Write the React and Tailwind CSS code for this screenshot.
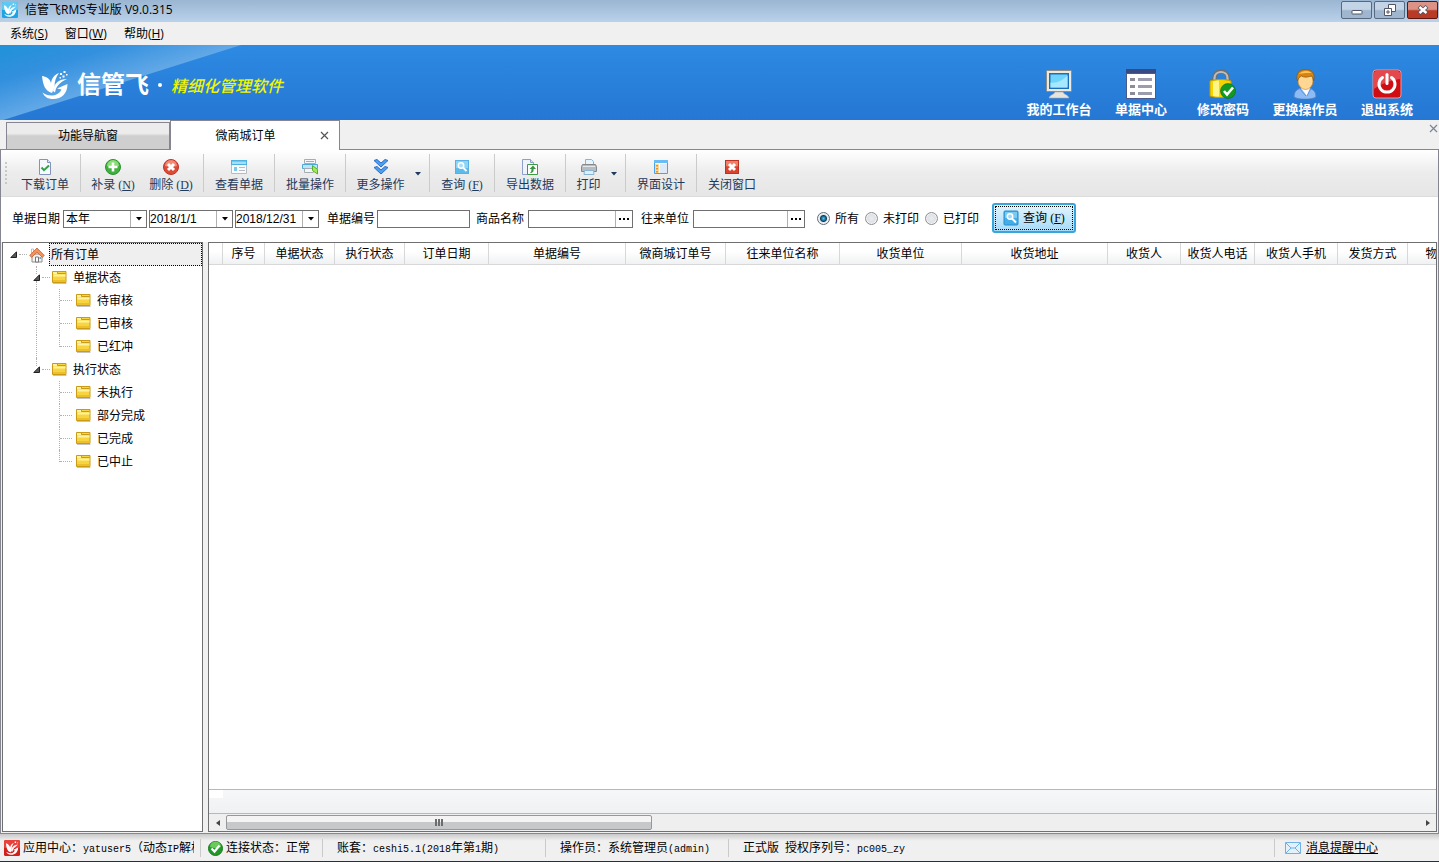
import { useState } from "react";

const columns = [
  { label: "", width: "w-[14px]" },
  { label: "序号", width: "w-[42px]" },
  { label: "单据状态", width: "w-[70px]" },
  { label: "执行状态", width: "w-[70px]" },
  { label: "订单日期", width: "w-[84px]" },
  { label: "单据编号", width: "w-[137px]" },
  { label: "微商城订单号", width: "w-[100px]" },
  { label: "往来单位名称", width: "w-[114px]" },
  { label: "收货单位", width: "w-[122px]" },
  { label: "收货地址", width: "w-[146px]" },
  { label: "收货人", width: "w-[73px]" },
  { label: "收货人电话", width: "w-[74px]" },
  { label: "收货人手机", width: "w-[83px]" },
  { label: "发货方式", width: "w-[70px]" },
  { label: "物", width: "w-[48px]" },
];

const tree = [
  { label: "单据状态", children: ["待审核", "已审核", "已红冲"] },
  { label: "执行状态", children: ["未执行", "部分完成", "已完成", "已中止"] },
];

function Swirl({ className }) {
  return (
    <svg viewBox="0 0 28 30" className={className} fill="currentColor" aria-hidden="true">
      <path d="M1 6c4 .5 8 2.500 9 7 1-5 3-8 8-10-3 4-4.500 8-4.500 14L11 23C4 21 2 15 1 6z" />
      <path d="M26 9c-8 0-13 4-14 12l2 1.500C15 16 19 12 26 9z" />
      <path d="M16 18.500L26.500 14C26.500 23 21 29 12 29c-5 0-8.500-2-10.500-6.500C7 27 17 27 20.500 19.500z" />
      <path d="M19 3h2v2h-2zM21.500 5.500h2v2h-2zM22.500 1h2v2h-2zM25 4h1.500v1.500H25zM18.500 7h1.500v1.500h-1.500z" />
    </svg>
  );
}

function LogoTile({ top, bottom }) {
  return (
    <svg viewBox="0 0 16 16" className="size-4 shrink-0" aria-hidden="true">
      <rect width="16" height="16" rx="1.5" fill={bottom} />
      <rect width="16" height="8" rx="1.5" fill={top} />
      <g transform="translate(1.500 1.500) scale(.46)" fill="#fff">
        <path d="M1 4c4 .5 8 4.500 9 9 1-5 3-8 8-10-3 4-4.500 8-4.500 14L11 24C4 21 2 15 1 4z" />
        <path d="M27 7c-9 0-14 5-15 14l3 1.500C16 16 20 12 27 7z" />
        <path d="M16 18.500L27.500 13C27.500 23 21 29 12 29c-5 0-8.500-2-10.500-6.500C7 27 17 27 20.500 19.500z" />
        <path d="M20 0h3v3h-3zM25 2h2v2h-2z" />
      </g>
    </svg>
  );
}

function Monitor() {
  return (
    <svg viewBox="0 0 30 30" className="size-[30px]" aria-hidden="true">
      <rect x="2.500" y="1.500" width="25" height="21" rx="1" fill="#ece9e2" stroke="#8d8d88" />
      <rect x="5" y="4" width="20" height="16" fill="#1b6fb8" />
      <rect x="6.500" y="5.500" width="17" height="13" fill="#6fd4fb" />
      <path d="M6.500 18.500v-5c6 1 12-2 17-7v12z" fill="#a5e8ff" />
      <path d="M11 23h8c1 3 5 2.500 6 6H5c1-3.500 5-3 6-6z" fill="#e6e4de" stroke="#a9a7a1" strokeWidth=".6" />
    </svg>
  );
}

function FormIcon() {
  return (
    <svg viewBox="0 0 30 30" className="size-[30px]" aria-hidden="true">
      <rect width="30" height="30" fill="#4a5a8c" />
      <rect width="30" height="4" fill="#384a80" />
      <rect x="1" y="5" width="28" height="24" fill="#fff" />
      <path d="M4 9h5v3H4zM4 16h5v3H4zM4 23h5v3H4z" fill="#8c8c98" />
      <path d="M12 9h14v3H12zM12 16h14v3H12zM12 23h14v3H12z" fill="#9c9caf" />
    </svg>
  );
}

function LockIcon() {
  return (
    <svg viewBox="0 0 30 30" className="size-[30px]" aria-hidden="true">
      <path d="M6.500 14V9c0-9 13-9 13 0v5" fill="none" stroke="#6f6f6f" strokeWidth="4.500" />
      <path d="M6.500 13V9c0-8 13-8 13 0v4" fill="none" stroke="#bdbdbd" strokeWidth="2.200" />
      <path d="M2 12c6-2 15-2 21 0v15c-6 2-15 2-21 0z" fill="#f5d400" stroke="#c49a05" />
      <path d="M5 12.500c2-.7 4-1 6-1v16c-2 0-4 0-6-.6z" fill="#fff68a" />
      <circle cx="20" cy="22" r="7.500" fill="#129a22" stroke="#0b6a15" strokeWidth=".6" />
      <path d="M16 22l3 3.500 6-7" fill="none" stroke="#fff" strokeWidth="2.600" />
    </svg>
  );
}

function UserIcon() {
  return (
    <svg viewBox="0 0 30 30" className="size-[30px]" aria-hidden="true">
      <path d="M4 28c0-6 3-8 8-9h6c5 1 8 3 8 9-4 3-18 3-22 0z" fill="#8dbcf5" stroke="#4f83cb" />
      <path d="M11 19l6 8 3-8-3-2h-4z" fill="#fff" />
      <path d="M16 27l-7-8M17 27l4-8" stroke="#5c93dc" />
      <ellipse cx="15.500" cy="12" rx="7.500" ry="8.500" fill="#ffd795" stroke="#d18a2a" strokeWidth=".7" />
      <path d="M7.500 12C5 4 10 .5 15.500.5S26 4 23.500 12c0-3-1-4.500-2-5-4 1.500-8 1.500-10 0-2 1-3.500 2.500-4 5z" fill="#d98410" stroke="#8f5305" strokeWidth=".7" />
      <path d="M9 5c3-3.500 9-4 12.500-1-3.500 0-7-.5-12.500 1z" fill="#ffc35c" />
    </svg>
  );
}

function PowerIcon() {
  return (
    <svg viewBox="0 0 30 30" className="size-[30px]" aria-hidden="true">
      <rect x="1" y="1" width="28" height="28" rx="3" fill="#cf0d12" stroke="#e89a9c" />
      <path d="M2 4c0-1 1-2 2-2h22c1 0 2 1 2 2v6C20 11 8 15 2 20z" fill="#ec6266" opacity=".7" />
      <path d="M10.500 8.500a8 8 0 1 0 9 0" fill="none" stroke="#fff" strokeWidth="3" strokeLinecap="round" />
      <path d="M15 5.500v9" stroke="#fff" strokeWidth="3" strokeLinecap="round" />
    </svg>
  );
}

const shortcuts = [
  { label: "我的工作台", Icon: Monitor },
  { label: "单据中心", Icon: FormIcon },
  { label: "修改密码", Icon: LockIcon },
  { label: "更换操作员", Icon: UserIcon },
  { label: "退出系统", Icon: PowerIcon },
];

// 16px toolbar glyphs
const glyphs = {
  download: (
    <>
      <path d="M2.500.5h8l3 3v12h-11z" fill="#f6f9fd" stroke="#8493bd" />
      <path d="M10.500.5v3h3" fill="#dfe6f5" stroke="#8493bd" />
      <path d="M4.500 8.500l2.500 2.700 5-4.700" fill="none" stroke="#31a345" strokeWidth="2" />
    </>
  ),
  add: (
    <>
      <circle cx="8" cy="8" r="7.500" fill="#3fb13d" stroke="#2f8f30" />
      <path d="M2 7a6 6 0 0 1 12 0c-4 1.500-8 1.500-12 0z" fill="#8bdc75" />
      <path d="M8 3.500v9M3.500 8h9" stroke="#fff" strokeWidth="2.600" />
    </>
  ),
  remove: (
    <>
      <circle cx="8" cy="8" r="7.500" fill="#dd4b38" stroke="#c03424" />
      <path d="M2 7a6 6 0 0 1 12 0c-4 1.500-8 1.500-12 0z" fill="#f08c76" />
      <path d="M5 5l6 6M11 5l-6 6" stroke="#fff" strokeWidth="3" />
    </>
  ),
  view: (
    <>
      <path d="M.5 1.500h15v13H.5z" fill="#fafbfc" stroke="#b5bcc2" />
      <path d="M0 1h16v5H0z" fill="#4db1e2" />
      <path d="M1 2.500h14V5H1z" fill="#a4def7" />
      <path d="M3 8h3v4H3z" fill="#7cc8ec" />
      <path d="M8 8.500h6M8 11.500h6" stroke="#b5bcc2" />
    </>
  ),
  batch: (
    <>
      <path d="M2.500.5h11v4h-11z" fill="#f3f5f6" stroke="#a4adb2" />
      <path d="M4 2.500h8" stroke="#a4adb2" />
      <path d="M.5 5.500h15v4H.5z" fill="#b8e6fa" stroke="#4fa9d8" />
      <path d="M2.500 9.500h9v4h-9z" fill="#f3f5f6" stroke="#a4adb2" />
      <path d="M10.500 6.500l5 4v4.500l-5-3.500z" fill="#a4e85c" stroke="#59ae2d" />
    </>
  ),
  more: (
    <>
      <path d="M1 1.500l3-1 4 3.500 4-3.500 3 1-7 6.500z" fill="#4c9ff0" stroke="#2c6ecb" />
      <path d="M1 8.500l3-1 4 3.500 4-3.500 3 1L8 15z" fill="#4c9ff0" stroke="#2c6ecb" />
    </>
  ),
  search: (
    <>
      <rect x="1.500" y="1.500" width="13" height="13" fill="#8fd3f5" stroke="#58b0e3" />
      <path d="M2 9h12v5H2z" fill="#5bbcec" />
      <circle cx="7" cy="6.500" r="2.700" fill="#a9defa" stroke="#fff" strokeWidth="1.500" />
      <path d="M9 8.500l3.500 3.500" stroke="#fff" strokeWidth="2" />
    </>
  ),
  exportData: (
    <>
      <path d="M.5.500h8l3 3v12H.5z" fill="#eef3fc" stroke="#8f9fc9" />
      <path d="M8.500.5v3h3" fill="#d6e0f5" stroke="#8f9fc9" />
      <path d="M5.500 5.500h10v10h-10z" fill="#fff" stroke="#3f9a45" />
      <path d="M8 14c3 0 4-2 3.500-4H14l-3-3.500L7.500 10h2c0 2-.5 3-1.500 4z" fill="#3a9440" />
    </>
  ),
  print: (
    <>
      <path d="M4.500.5h6l2 2v4h-8z" fill="#e6f4fd" stroke="#8ab4d4" />
      <path d="M1.500 5.500h13l1 2v5H.5v-5z" fill="#b8bcc1" stroke="#85898e" />
      <path d="M2 7.500h12" stroke="#e5e7e9" />
      <path d="M3.500 11.500h9l.5 4H3z" fill="#d8effc" stroke="#8ab4d4" />
    </>
  ),
  design: (
    <>
      <path d="M1.500 1.500h13v13h-13z" fill="#fff" stroke="#4aa3e6" />
      <path d="M1 1h14v3H1z" fill="#68bdf4" />
      <path d="M2 5h4v9H2z" fill="#ffd99a" />
      <path d="M3 6h2v1.500H3zM3 9h2v1.500H3zM3 12h2v1.500H3z" fill="#e8922f" />
      <path d="M7 5h7v9H7z" fill="#dfeaf9" />
    </>
  ),
  close: (
    <>
      <rect x="1.500" y="1.500" width="13" height="13" fill="#d9432f" stroke="#bb3423" />
      <path d="M2 2h12v5c-4 1.500-8 1.500-12 0z" fill="#ee8069" />
      <path d="M5 5l6 6M11 5l-6 6" stroke="#fff" strokeWidth="3" />
    </>
  ),
};

function Glyph({ name }) {
  return (
    <svg viewBox="0 0 16 16" className="size-4 shrink-0" aria-hidden="true">
      {glyphs[name]}
    </svg>
  );
}

function Arrow({ className }) {
  return (
    <svg viewBox="0 0 6 4" className={className} aria-hidden="true">
      <path d="M0 0h6L3 3.500z" fill="currentColor" />
    </svg>
  );
}

function Mono({ children }) {
  return <span className="font-['Liberation_Mono','Noto_Sans_CJK_SC',monospace] text-[10px]">{children}</span>;
}

function Key({ letter }) {
  return (
    <span className="font-['Liberation_Serif',serif] text-xs">
      {" "}(<u>{letter}</u>)
    </span>
  );
}

function Tool({ icon, label, hotkey, width }) {
  return (
    <button type="button" className={`flex h-full flex-col items-center gap-0.5 pt-[9px] whitespace-nowrap ${width}`}>
      <Glyph name={icon} />
      <span>
        {label}
        {hotkey && <Key letter={hotkey} />}
      </span>
    </button>
  );
}

function Divider() {
  return <span className="my-1 w-px shrink-0 bg-[#cbcbcb]" />;
}

function DropArrow({ label }) {
  return (
    <button type="button" aria-label={label} className="flex h-full w-3.5 items-start pt-[22px]">
      <Arrow className="h-1 w-1.5" />
    </button>
  );
}

function Toolbar() {
  return (
    <div className="flex h-[47px] shrink-0 border-b border-[#dcdcdc] bg-linear-to-b from-white via-[#ececec] to-[#e6e6e6] text-[#1e395b]">
      <span className="my-3 ml-1 w-0 border-l-2 border-dotted border-[#c8c8c8]" />
      <span className="w-[3px]" />
      <Tool icon="download" label="下载订单" width="w-[70px]" />
      <Divider />
      <div className="flex px-[3px]">
        <Tool icon="add" label="补录" hotkey="N" width="w-[58px]" />
        <Tool icon="remove" label="删除" hotkey="D" width="w-[58px]" />
      </div>
      <Divider />
      <Tool icon="view" label="查看单据" width="w-[70px]" />
      <Divider />
      <Tool icon="batch" label="批量操作" width="w-[70px]" />
      <Divider />
      <Tool icon="more" label="更多操作" width="w-[69px]" />
      <DropArrow label="更多操作选项" />
      <Divider />
      <Tool icon="search" label="查询" hotkey="F" width="w-[64px]" />
      <Divider />
      <Tool icon="exportData" label="导出数据" width="w-[70px]" />
      <Divider />
      <Tool icon="print" label="打印" width="w-[45px]" />
      <DropArrow label="打印选项" />
      <Divider />
      <Tool icon="design" label="界面设计" width="w-[70px]" />
      <Divider />
      <Tool icon="close" label="关闭窗口" width="w-[70px]" />
    </div>
  );
}

function DateBox({ label, value }) {
  return (
    <div className="flex h-[18px] w-[84px] border border-[#707070] bg-white">
      <input aria-label={label} defaultValue={value} className="w-0 flex-1 outline-none" />
      <button type="button" aria-label={`选择${label}`} className="flex w-4 items-center justify-center border-l border-[#b0b0b0]">
        <Arrow className="h-1 w-1.5" />
      </button>
    </div>
  );
}

function LookupField({ id, label, width }) {
  return (
    <>
      <label htmlFor={id}>{label}</label>
      <div className={`flex h-[18px] border border-[#707070] bg-white ${width}`}>
        <input id={id} className="w-0 flex-1 px-0.5 outline-none" />
        <button type="button" aria-label={`选择${label}`} className="flex w-[17px] items-center justify-center border-l border-[#b0b0b0]">
          <svg viewBox="0 0 10 2" className="h-0.5 w-2.5" aria-hidden="true">
            <path d="M0 0h2v2H0zM4 0h2v2H4zM8 0h2v2H8z" />
          </svg>
        </button>
      </div>
    </>
  );
}

function Filters() {
  const [printed, setPrinted] = useState("所有");

  return (
    <form onSubmit={(e) => e.preventDefault()} className="flex h-[45px] shrink-0 items-center bg-white pb-0.5 pl-[11px] whitespace-nowrap">
      <div className="flex items-center gap-0.5">
        <label htmlFor="range" className="pr-px">单据日期</label>
        <div className="relative flex h-[18px] w-[84px] border border-[#707070]">
          <select id="range" className="w-full appearance-none pl-0.5 outline-none">
            <option>本年</option>
          </select>
          <span className="pointer-events-none absolute inset-y-0 right-0 flex w-4 items-center justify-center border-l border-[#b0b0b0]">
            <Arrow className="h-1 w-1.5" />
          </span>
        </div>
        <DateBox label="开始日期" value="2018/1/1" />
        <DateBox label="结束日期" value="2018/12/31" />
      </div>
      <div className="ml-2 flex items-center gap-0.5">
        <label htmlFor="code">单据编号</label>
        <input id="code" className="h-[18px] w-[93px] border border-[#707070] px-0.5 outline-none" />
      </div>
      <div className="ml-1.5 flex items-center gap-1">
        <LookupField id="goods" label="商品名称" width="w-[105px]" />
      </div>
      <div className="ml-2 flex items-center gap-1">
        <LookupField id="partner" label="往来单位" width="w-[112px]" />
      </div>
      <div className="ml-3 flex items-center gap-1.5">
        {["所有", "未打印", "已打印"].map((o) => (
          <label key={o} className="flex items-center gap-[5px]">
            <input
              type="radio"
              name="printed"
              checked={printed === o}
              onChange={() => setPrinted(o)}
              className="size-[13px] appearance-none rounded-full border border-[#8e8f8f] bg-radial from-[#e9ecf0] to-[#d3d6da] shadow-[inset_0_0_0_1px_#f4f4f4] checked:border-[#5a6f80] checked:bg-[radial-gradient(circle,#5cc8ee_0,#1c6f9c_2px,#123c55_3px,#dfe7ee_4px)]"
            />
            {o}
          </label>
        ))}
      </div>
      <button type="submit" className="mb-0.5 ml-[13px] h-[30px] rounded-[3px] border-2 border-[#3aa5dc] bg-linear-to-b from-[#e3f4fd] via-[#c4e8fb] to-[#a4dbf7] p-px">
        <span className="flex h-full items-center gap-1 border border-dotted border-black px-[7px]">
          <svg viewBox="0 0 16 16" className="size-4" aria-hidden="true">
            <rect x="1" y="1" width="14" height="14" rx="1" fill="#42aee8" stroke="#2a8ccb" />
            <path d="M2 2h12v6H2z" fill="#7acbf3" />
            <circle cx="7" cy="6.500" r="2.700" fill="#9bd9f8" stroke="#fff" strokeWidth="1.500" />
            <path d="M9 8.500l4 4" stroke="#fff" strokeWidth="2" />
          </svg>
          <span>
            查询
            <Key letter="F" />
          </span>
        </span>
      </button>
    </form>
  );
}

function Folder() {
  return (
    <svg viewBox="0 0 15 15" className="size-[15px] shrink-0" aria-hidden="true">
      <path d="M.5 1.500h13.500v11H.5z" fill="#f7d541" stroke="#c99b16" />
      <path d="M1 2h4v2H1zM1.500 4.500h12v2h-12z" fill="#fff3a0" />
      <path d="M5.500 1.500v2h8" fill="none" stroke="#c99b16" />
      <path d="M1 10h12.500v2H1z" fill="#eebf2c" />
      <path d="M1 13.500h13.500" stroke="#c4c4c4" />
    </svg>
  );
}

function Expander({ above, below, label }) {
  return (
    <button type="button" aria-label={`折叠${label}`} className="flex w-[11px] flex-col items-center">
      <span className={`w-0 flex-1 border-l border-dotted ${above ? "border-[#b0b0b0]" : "border-transparent"}`} />
      <svg viewBox="0 0 7 7" className="size-[7px]" aria-hidden="true">
        <path d="M6.500.8v5.700H.8z" fill="#595959" stroke="#222" />
      </svg>
      <span className={`w-0 flex-1 border-l border-dotted ${below ? "border-[#b0b0b0]" : "border-transparent"}`} />
    </button>
  );
}

function Dots({ width }) {
  return <span className={`h-0 self-center border-t border-dotted border-[#b0b0b0] ${width}`} />;
}

function OrderTree() {
  return (
    <nav className="w-[201px] shrink-0 border border-[#707070] bg-white">
      <div className="flex h-[23px] pl-[5px]">
        <Expander label="所有订单" />
        <Dots width="w-2" />
        <svg viewBox="0 0 16 16" className="mr-1 ml-0.5 size-4 self-center" aria-hidden="true">
          <path d="M3 7h10v8H3z" fill="#f3f3f1" stroke="#8c8c8c" />
          <path d="M6.500 10h3v5h-3z" fill="#fff" stroke="#777" />
          <path d="M2.500 2h2v4h-2z" fill="#fff" stroke="#999" strokeWidth=".6" />
          <path d="M10.500 10h1.500v2h-1.500z" fill="#7a9fc5" />
          <path d="M.7 8.500L8 1l7.300 7.500-2 1.800L8 5.200 2.700 10.300z" fill="#f4935c" stroke="#cc5b2a" strokeWidth=".8" />
        </svg>
        <a href="#all" className="flex flex-1 items-center border border-dotted border-black bg-[#efefef] pl-px">所有订单</a>
      </div>
      <ul>
        {tree.map((group, gi) => {
          const last = gi === tree.length - 1;
          return (
            <li key={group.label}>
              <div className="flex h-[23px] pl-7">
                <Expander above below={!last} label={group.label} />
                <Dots width="w-2" />
                <a href="#group" className="ml-0.5 flex items-center gap-1.5">
                  <Folder />
                  {group.label}
                </a>
              </div>
              <ul>
                {group.children.map((item, i) => (
                  <li key={item} className="flex h-[23px] pl-[33px]">
                    <span className={`w-[23px] border-l border-dotted ${last ? "border-transparent" : "border-[#b0b0b0]"}`} />
                    <span className={`border-l border-dotted border-[#b0b0b0] ${i === group.children.length - 1 ? "h-3" : "h-full"}`} />
                    <Dots width="w-3" />
                    <a href="#item" className="ml-1 flex items-center gap-1.5">
                      <Folder />
                      {item}
                    </a>
                  </li>
                ))}
              </ul>
            </li>
          );
        })}
      </ul>
    </nav>
  );
}

function OrderGrid() {
  return (
    <section className="flex min-w-0 flex-1 flex-col border border-[#707070] bg-white">
      <div className="flex-1 overflow-hidden">
        <table className="w-max border-collapse">
          <thead>
            <tr>
              {columns.map((c, i) => (
                <th key={i} scope="col" className="p-0 font-normal whitespace-nowrap">
                  <div className={`h-[22px] border-r border-b border-[#d8d8d8] bg-linear-to-b from-white from-40% to-[#f0f1f3] leading-[22px] ${c.width}`}>{c.label}</div>
                </th>
              ))}
            </tr>
          </thead>
        </table>
      </div>
      <div className="h-[25px] border-y border-[#b8b8b8] bg-linear-to-b from-[#f6f7f9] to-[#f0f1f3]">
        <div className="h-2 w-3.5 bg-white" />
      </div>
      <div className="flex h-[17px] items-center bg-[#efefef]">
        <button type="button" aria-label="向左滚动" className="flex w-[17px] justify-center">
          <svg viewBox="0 0 4 6" className="h-1.5 w-1" aria-hidden="true"><path d="M4 0v6L0 3z" fill="#444" /></svg>
        </button>
        <div className="flex-1">
          <div className="flex h-[15px] w-[426px] items-center justify-center gap-px rounded-[2px] border border-[#979797] bg-linear-to-b from-[#f4f4f4] from-45% to-[#c6c8ca] to-50%">
            <span className="h-[7px] w-0.5 bg-[#6d6d6d]" />
            <span className="h-[7px] w-0.5 bg-[#6d6d6d]" />
            <span className="h-[7px] w-0.5 bg-[#6d6d6d]" />
          </div>
        </div>
        <button type="button" aria-label="向右滚动" className="flex w-[17px] justify-center">
          <svg viewBox="0 0 4 6" className="h-1.5 w-1" aria-hidden="true"><path d="M0 0v6l4-3z" fill="#444" /></svg>
        </button>
      </div>
    </section>
  );
}

function TitleBar() {
  const box = "flex h-[18px] w-[31px] items-center justify-center rounded-[2px] border";
  return (
    <div className="flex h-[22px] shrink-0 items-start bg-linear-to-b from-[#9bb6d2] to-[#bad1ea] pr-px">
      <div className="flex flex-1 items-center gap-[7px] pt-0.5 pl-0.5">
        <LogoTile top="#5fc9f2" bottom="#1aa5e4" />
        <span className="font-['Open_Sans','Noto_Sans_CJK_SC',sans-serif]">信管飞RMS专业版 V9.0.315</span>
      </div>
      <div className="flex gap-0.5 pt-px">
        <button type="button" aria-label="最小化" className={`${box} border-[#56697f] bg-linear-to-b from-[#c3d4e6] from-45% to-[#9fb6ce] to-55%`}>
          <svg viewBox="0 0 12 12" className="size-3" aria-hidden="true"><rect x="1" y="6.500" width="10" height="3.500" rx=".5" fill="#fff" stroke="#535666" /></svg>
        </button>
        <button type="button" aria-label="还原" className={`${box} border-[#56697f] bg-linear-to-b from-[#c3d4e6] from-45% to-[#9fb6ce] to-55%`}>
          <svg viewBox="0 0 12 12" className="size-3" fill="#fff" stroke="#535666" aria-hidden="true">
            <path d="M4.500.5h7v7h-7z" />
            <path d="M.5 4.500h7v7h-7z" />
            <path d="M3 7h2v2H3z" />
          </svg>
        </button>
        <button type="button" aria-label="关闭" className={`${box} border-[#5b1712] bg-linear-to-b from-[#dc9284] from-45% to-[#b93b26] to-55%`}>
          <svg viewBox="0 0 12 12" className="size-3" fill="none" aria-hidden="true">
            <path d="M2 2.500l8 7M10 2.500l-8 7" stroke="#535666" strokeWidth="4.200" />
            <path d="M2.500 3l7 6M9.500 3l-7 6" stroke="#fff" strokeWidth="2.400" />
          </svg>
        </button>
      </div>
    </div>
  );
}

function Banner() {
  return (
    <header className="flex h-[75px] shrink-0 items-center justify-between bg-[linear-gradient(162.5deg,#2092da_0,#3390de_35px,#62a8e7_72px,transparent_73px),linear-gradient(#2d8ae3,#2577d3)] pr-[11px] pl-[41px]">
      <div className="flex items-center pt-1 text-white">
        <Swirl className="h-[30px] w-7" />
        <h1 className="ml-2 text-2xl leading-8 font-bold">信管飞</h1>
        <span className="mx-[9px] size-1 rounded-full bg-white" />
        <span className="self-end text-base leading-7 font-medium text-[#f1f500] italic">精细化管理软件</span>
      </div>
      <div className="flex pt-[23px]">
        {shortcuts.map(({ label, Icon }) => (
          <button key={label} type="button" className="flex w-[82px] flex-col items-center gap-px text-[13px] leading-5 font-bold text-white">
            <Icon />
            {label}
          </button>
        ))}
      </div>
    </header>
  );
}

function Tabs() {
  return (
    <div className="flex h-[30px] shrink-0 items-end">
      <span className="w-1.5 self-stretch border-b border-[#868692]" />
      <button type="button" className="h-7 w-[164px] border border-[#868692] bg-linear-to-b from-[#ececec] from-40% to-[#cfcfcf] to-50%">功能导航窗</button>
      <div className="flex h-[30px] w-[170px] items-center border border-b-0 border-[#868692] bg-white">
        <button type="button" className="flex-1 text-center">微商城订单</button>
        <button type="button" aria-label="关闭标签" className="mr-2.5">
          <svg viewBox="0 0 9 9" className="size-[9px]" aria-hidden="true"><path d="M1 1l7 7M8 1L1 8" stroke="#555" strokeWidth="1.200" /></svg>
        </button>
      </div>
      <div className="flex flex-1 items-start justify-end self-stretch border-b border-[#868692] pt-1 pr-px">
        <button type="button" aria-label="关闭全部">
          <svg viewBox="0 0 9 9" className="size-[9px]" aria-hidden="true"><path d="M1 1l7 7M8 1L1 8" stroke="#7b8595" strokeWidth="1.200" /></svg>
        </button>
      </div>
    </div>
  );
}

function StatusBar() {
  return (
    <footer className="flex h-7 shrink-0 items-center border-b border-[#26303c] bg-linear-to-b from-[#c9c9c9] to-[#f0f0f0] to-25% pt-px whitespace-nowrap">
      <div className="flex w-[200px] items-center gap-[3px] pr-1.5 pl-1">
        <LogoTile top="#e8403a" bottom="#d11f1c" />
        <span className="min-w-0 overflow-hidden">应用中心：<Mono>yatuser5</Mono>（动态<Mono>IP</Mono>解析）</span>
      </div>
      <div className="flex h-[18px] w-[122px] items-center gap-[3px] border-l border-[#cacaca] pl-[7px]">
        <svg viewBox="0 0 15 15" className="size-[15px]" aria-hidden="true">
          <circle cx="7.500" cy="7.500" r="7" fill="#1f9a28" stroke="#157a1c" />
          <path d="M2 6a5.500 5.500 0 0 1 11 0c-4 1-7 1.500-11 0z" fill="#6cc95c" />
          <path d="M3.500 7.500l3 3 5-6" fill="none" stroke="#fff" strokeWidth="2.200" />
        </svg>
        连接状态：正常
      </div>
      <div className="flex h-[18px] w-[223px] items-center border-l border-[#cacaca] pl-3.5">
        <span>账套：<Mono>ceshi5.1(2018</Mono>年第<Mono>1</Mono>期<Mono>)</Mono></span>
      </div>
      <div className="flex h-[18px] w-[183px] items-center border-l border-[#cacaca] pl-3.5">
        <span>操作员：系统管理员<Mono>(admin)</Mono></span>
      </div>
      <div className="flex h-[18px] flex-1 items-center border-l border-[#cacaca] pl-3.5">
        <span>正式版<Mono> </Mono>授权序列号：<Mono>pc005_zy</Mono></span>
      </div>
      <div className="flex h-[18px] w-[165px] items-center gap-[5px] border-l border-[#cacaca] pl-2.5">
        <svg viewBox="0 0 16 12" className="h-3 w-4" aria-hidden="true">
          <path d="M.5.500h15v11H.5z" fill="#e3f1fd" stroke="#6fb0e6" />
          <path d="M1 1l5 5h4l5-5M1 11l5-5M15 11l-5-5" fill="none" stroke="#6fb0e6" />
        </svg>
        <a href="#messages" className="underline">消息提醒中心</a>
      </div>
    </footer>
  );
}

export default function App() {
  return (
    <div className="flex h-screen flex-col overflow-hidden bg-[#f0f0f0] font-['Liberation_Sans','Noto_Sans_CJK_SC',sans-serif] text-xs text-black">
      <TitleBar />
      <div className="flex h-[23px] shrink-0 items-center gap-[17px] pl-2.5 font-['Open_Sans','Noto_Sans_CJK_SC',sans-serif]">
        <button type="button">系统(<u>S</u>)</button>
        <button type="button">窗口(<u>W</u>)</button>
        <button type="button">帮助(<u>H</u>)</button>
      </div>
      <Banner />
      <Tabs />
      <main className="flex min-h-0 flex-1 flex-col border-r border-b border-l border-[#868692] bg-white">
        <Toolbar />
        <Filters />
        <div className="flex min-h-0 flex-1 gap-[5px] bg-[#f0f0f0] pr-px pb-px pl-px">
          <OrderTree />
          <OrderGrid />
        </div>
      </main>
      <StatusBar />
    </div>
  );
}
